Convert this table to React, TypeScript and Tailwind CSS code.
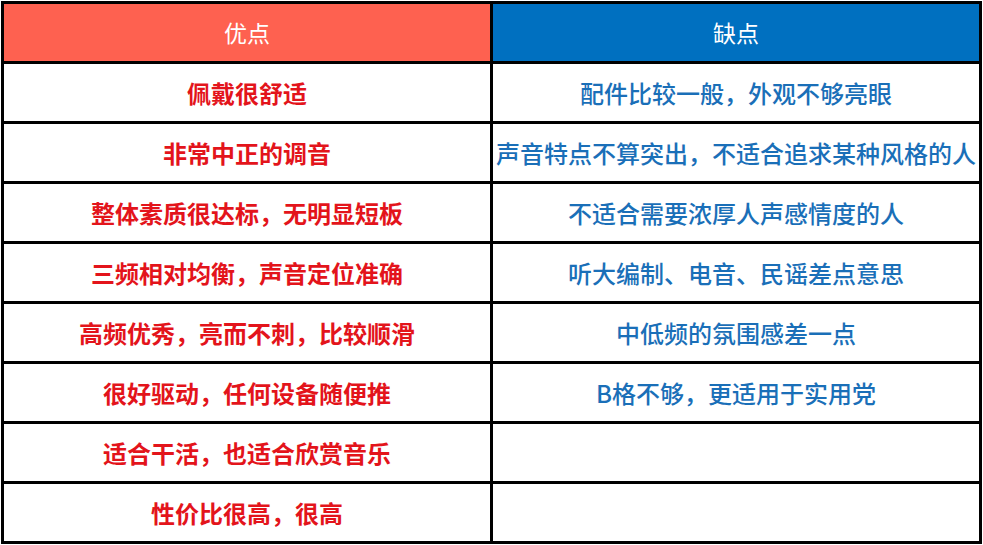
const pros = [
  "佩戴很舒适",
  "非常中正的调音",
  "整体素质很达标，无明显短板",
  "三频相对均衡，声音定位准确",
  "高频优秀，亮而不刺，比较顺滑",
  "很好驱动，任何设备随便推",
  "适合干活，也适合欣赏音乐",
  "性价比很高，很高",
];

const cons = [
  "配件比较一般，外观不够亮眼",
  "声音特点不算突出，不适合追求某种风格的人",
  "不适合需要浓厚人声感情度的人",
  "听大编制、电音、民谣差点意思",
  "中低频的氛围感差一点",
  "B格不够，更适用于实用党",
  "",
  "",
];

export default function App() {
  return (
    <div className="h-[545px] w-[983px] bg-white pl-[1px] pt-[1px] font-['Noto_Sans_CJK_SC',sans-serif]">
      <div className="grid w-[981px] grid-cols-[486px_486px] auto-rows-[57px] gap-[3px] bg-black p-[3px]">
        <div className="flex items-center justify-center bg-[#fe6150] text-[23px] text-white">优点</div>
        <div className="flex items-center justify-center bg-[#0070c0] text-[23px] text-white">缺点</div>
        {pros.map((p, i) => (
          <div key={i} className="contents">
            <div className="flex items-center justify-center bg-white text-[24px] font-bold text-[#e3141b]">
              {p}
            </div>
            <div className="flex items-center justify-center bg-white text-[24px] font-medium text-[#1a6fb8]">
              {cons[i]}
            </div>
          </div>
        ))}
      </div>
    </div>
  );
}
